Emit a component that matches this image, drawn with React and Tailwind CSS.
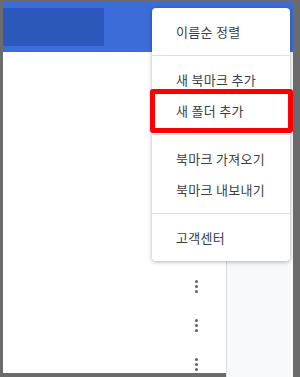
import React from "react";

const groups = [
  ["이름순 정렬"],
  ["새 북마크 추가", "새 폴더 추가"],
  ["북마크 가져오기", "북마크 내보내기"],
  ["고객센터"],
];

function Kebab() {
  return (
    <div className="flex h-[39px] w-[24px] flex-col items-center justify-center gap-[2px]">
      <span className="h-[3px] w-[3px] rounded-full bg-[#5f6368]" />
      <span className="h-[3px] w-[3px] rounded-full bg-[#5f6368]" />
      <span className="h-[3px] w-[3px] rounded-full bg-[#5f6368]" />
    </div>
  );
}

export default function App() {
  return (
    <div
      className="relative h-[377px] w-[300px] overflow-hidden bg-[#6b6b6b] pb-[4px] pl-[3px] pr-[7px] pt-[2px]"
      style={{ fontFamily: '"Noto Sans CJK KR", "Noto Sans", sans-serif' }}
    >
      <div className="flex h-full flex-col bg-white">
        {/* Header */}
        <header className="flex h-[50px] shrink-0 items-center bg-[#3b6cd8]">
          <div className="h-[38px] w-[101px] bg-[#2d58bb]" />
        </header>

        {/* Body */}
        <div className="flex flex-1">
          <div className="flex flex-1 flex-col items-end pr-[18px] pt-[215px]">
            <Kebab />
            <Kebab />
            <Kebab />
          </div>
          <div className="w-[67px] border-l border-[#dadce0] bg-[#f8f9fa]" />
        </div>
      </div>

      {/* Menu */}
      <div className="absolute left-[152px] top-[8px] w-[138px] rounded-[4px] bg-white shadow-[0_1px_4px_rgba(0,0,0,0.3)]">
        {groups.map((items, gi) => (
          <div key={gi} className={gi > 0 ? "border-t border-[#e0e0e0] py-2" : "py-2"}>
            {items.map((label) => (
              <div
                key={label}
                className="flex h-[31px] items-center pl-[24px] text-[13px] tracking-[0.3px] text-[#3c4043]"
              >
                {label}
              </div>
            ))}
          </div>
        ))}
      </div>

      {/* Highlight */}
      <div className="absolute left-[150px] top-[89px] h-[44px] w-[143px] rounded-[3px] border-[5px] border-[#ff0000]" />
    </div>
  );
}
